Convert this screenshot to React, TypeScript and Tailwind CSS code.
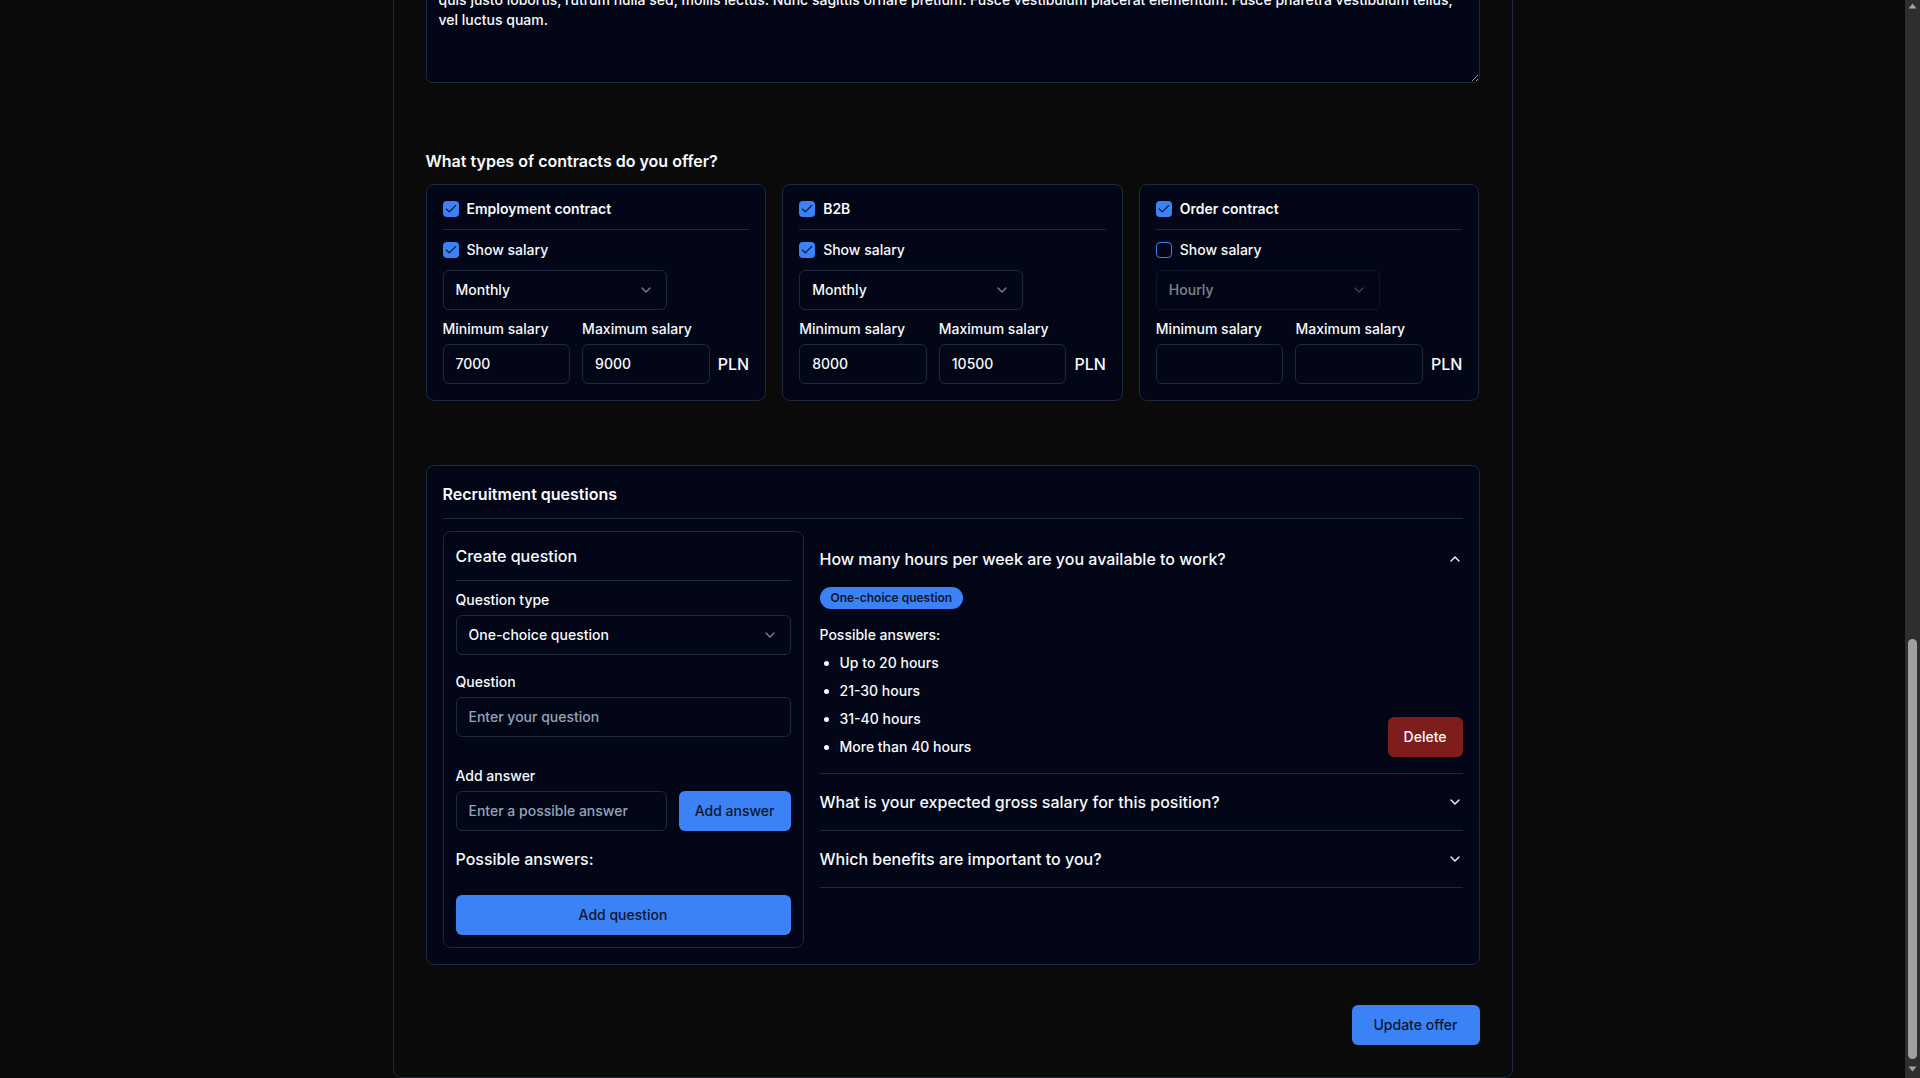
import { useLayoutEffect, useRef } from "react";

function CheckIcon() {
  return (
    <svg viewBox="0 0 24 24" className="h-3.5 w-3.5" fill="none" stroke="currentColor" strokeWidth={2} strokeLinecap="round" strokeLinejoin="round">
      <path d="M20 6 9 17l-5-5" />
    </svg>
  );
}

function ChevronDown({ className = "" }: { className?: string }) {
  return (
    <svg viewBox="0 0 24 24" className={`h-4 w-4 shrink-0 ${className}`} fill="none" stroke="currentColor" strokeWidth={2} strokeLinecap="round" strokeLinejoin="round">
      <path d="m6 9 6 6 6-6" />
    </svg>
  );
}

function ChevronUp({ className = "" }: { className?: string }) {
  return (
    <svg viewBox="0 0 24 24" className={`h-4 w-4 shrink-0 ${className}`} fill="none" stroke="currentColor" strokeWidth={2} strokeLinecap="round" strokeLinejoin="round">
      <path d="m18 15-6-6-6 6" />
    </svg>
  );
}

function Box({ checked }: { checked: boolean }) {
  return checked ? (
    <span className="flex h-4 w-4 shrink-0 items-center justify-center rounded-[4px] bg-[#3b82f6] text-[#0f172a]">
      <CheckIcon />
    </span>
  ) : (
    <span className="h-4 w-4 shrink-0 rounded-[4px] border border-[#3b82f6]" />
  );
}

function Field({ label, value }: { label: string; value: string }) {
  return (
    <div>
      <div className="text-sm font-medium leading-none">{label}</div>
      <input
        readOnly
        defaultValue={value}
        className="mt-2 block h-10 w-full rounded-md border border-[#1e293b] bg-[#020617] px-3 text-sm text-slate-50 outline-none"
      />
    </div>
  );
}

function BigText({ label, value }: { label: string; value: string }) {
  return (
    <div className="mt-6">
      <div className="text-sm font-medium leading-none">{label}</div>
      <textarea
        readOnly
        defaultValue={value}
        className="mt-2 block h-[206px] w-full rounded-md border border-[#1e293b] bg-[#020617] px-3 py-2 text-sm font-medium leading-5 text-slate-50 outline-none"
      />
    </div>
  );
}

function ContractCard({
  title,
  show,
  period,
  min,
  max,
}: {
  title: string;
  show: boolean;
  period: string;
  min: string;
  max: string;
}) {
  return (
    <div className="rounded-lg border border-[#1e293b] bg-[#020617] p-4">
      <div className="flex items-center gap-2 border-b border-[#1e293b] pb-3">
        <Box checked />
        <span className="text-sm font-semibold leading-4">{title}</span>
      </div>
      <div className="mt-3 flex items-center gap-2">
        <Box checked={show} />
        <span className="text-sm font-medium leading-4">Show salary</span>
      </div>
      <div
        className={
          show
            ? "mt-3 flex h-10 w-56 items-center justify-between rounded-md border border-[#1e293b] px-3 text-sm font-medium"
            : "mt-3 flex h-10 w-56 items-center justify-between rounded-md border border-[#1e293b] px-3 text-sm font-medium opacity-50"
        }
      >
        <span>{period}</span>
        <ChevronDown className="opacity-50" />
      </div>
      <div className="mt-3 flex items-end">
        <div className="w-32">
          <div className="text-sm font-medium leading-none">Minimum salary</div>
          <div className="mt-2 flex h-10 items-center rounded-md border border-[#1e293b] px-3 text-sm font-medium">{min}</div>
        </div>
        <div className="ml-3 w-32">
          <div className="text-sm font-medium leading-none">Maximum salary</div>
          <div className="mt-2 flex h-10 items-center rounded-md border border-[#1e293b] px-3 text-sm font-medium">{max}</div>
        </div>
        <span className="ml-2 flex h-10 items-center text-base font-medium">PLN</span>
      </div>
    </div>
  );
}

function AccordionRow({ q }: { q: string }) {
  return (
    <div className="flex items-center justify-between border-b border-[#1e293b] py-4">
      <span className="text-base font-medium leading-6">{q}</span>
      <ChevronDown />
    </div>
  );
}

function ScrollbarDrawing() {
  return (
    <div className="flex h-screen w-[15px] shrink-0 flex-col bg-[#2e2e2e]">
      <div className="flex h-[15px] justify-center pt-[3px]">
        <svg width="9" height="6" viewBox="0 0 9 6">
          <path d="M4.5 0.5 8.5 5.5H0.5Z" fill="#a3a3a3" />
        </svg>
      </div>
      <div className="flex flex-1 flex-col items-center justify-end pb-[4px]">
        <div className="h-[420px] w-[9px] rounded-full bg-[#9f9f9f]" />
      </div>
      <div className="flex h-[15px] justify-center pt-[3px]">
        <svg width="9" height="6" viewBox="0 0 9 6">
          <path d="M0.5 0.5H8.5L4.5 5.5Z" fill="#a3a3a3" />
        </svg>
      </div>
    </div>
  );
}

export default function App() {
  const ref = useRef<HTMLDivElement>(null);
  useLayoutEffect(() => {
    const el = ref.current;
    if (el) el.scrollTop = el.scrollHeight;
  }, []);

  const description =
    "We are looking for an experienced Frontend Developer to join our product team in Warsaw.\n" +
    "Lorem ipsum dolor sit amet, consectetur adipiscing elit. Cras vehicula, mi eget laoreet venenatis, neque\n" +
    "quis justo lobortis, rutrum nulla sed, mollis lectus. Nunc sagittis ornare pretium. Fusce vestibulum placerat elementum. Fusce pharetra vestibulum tellus, vel luctus quam.";

  return (
    <div className="flex h-screen bg-[#0a0a0b] text-slate-50 font-[family-name:Inter,sans-serif]">
      <div ref={ref} className="h-screen min-w-0 flex-1 overflow-y-scroll [scrollbar-width:none] [color-scheme:dark]">
        <div className="mx-auto w-[1120px] pt-10">
          <div className="rounded-lg border border-[#1e293b] p-8">
            <h1 className="text-2xl font-semibold leading-8">Edit job offer</h1>
            <p className="mt-1 text-sm leading-5 text-slate-400">Update the details of your job offer below.</p>

            <div className="mt-8 grid grid-cols-2 gap-6">
              <Field label="Job title" value="Senior Frontend Developer" />
              <Field label="Company name" value="Acme Software" />
              <Field label="Category" value="Frontend" />
              <Field label="Experience level" value="Senior" />
              <Field label="City" value="Warsaw" />
              <Field label="Work mode" value="Hybrid" />
              <Field label="Address" value="Prosta 20" />
              <Field label="Remote recruitment" value="Yes" />
              <Field label="Technologies" value="React, TypeScript, Tailwind CSS" />
              <Field label="Main technology" value="React" />
              <Field label="Languages" value="Polish, English" />
              <Field label="Start date" value="ASAP" />
              <Field label="Valid until" value="2025-12-31" />
              <Field label="Number of positions" value="2" />
            </div>

            <BigText label="Responsibilities" value="Building and maintaining web applications." />
            <BigText label="Requirements" value="3+ years of experience with React." />
            <BigText label="Benefits" value="Private medical care, sports card, flexible hours." />

            <div className="mt-6 text-sm font-medium leading-none">Description</div>
            <textarea
              readOnly
              defaultValue={description}
              className="mt-2 block h-[142px] w-full rounded-md border border-[#1e293b] bg-[#020617] px-3 py-2 text-sm font-medium leading-5 text-slate-50 outline-none"
            />

            <h3 className="mt-[66px] text-base font-semibold leading-6">What types of contracts do you offer?</h3>
            <div className="mt-[11px] grid grid-cols-3 gap-4">
              <ContractCard title="Employment contract" show period="Monthly" min="7000" max="9000" />
              <ContractCard title="B2B" show period="Monthly" min="8000" max="10500" />
              <ContractCard title="Order contract" show={false} period="Hourly" min="" max="" />
            </div>

            <div className="mt-16 rounded-lg border border-[#1e293b] bg-[#020617] p-4">
              <h3 className="border-b border-[#1e293b] pb-3 text-base font-semibold leading-6">Recruitment questions</h3>
              <div className="mt-3 grid grid-cols-[361px_1fr] items-start gap-4">
                <div className="rounded-lg border border-[#1e293b] p-3">
                  <div className="border-b border-[#1e293b] pb-3 text-base font-medium leading-6">Create question</div>
                  <div className="mt-3 text-sm font-medium leading-none">Question type</div>
                  <div className="mt-2 flex h-10 items-center justify-between rounded-md border border-[#1e293b] px-3 text-sm font-medium">
                    <span>One-choice question</span>
                    <ChevronDown className="opacity-50" />
                  </div>
                  <div className="mt-5 text-sm font-medium leading-none">Question</div>
                  <div className="mt-2 flex h-10 items-center rounded-md border border-[#1e293b] px-3 text-sm font-medium text-[#94a3b8]">
                    Enter your question
                  </div>
                  <div className="mt-8 text-sm font-medium leading-none">Add answer</div>
                  <div className="mt-2 flex gap-3">
                    <div className="flex h-10 flex-1 items-center rounded-md border border-[#1e293b] px-3 text-sm font-medium text-[#94a3b8]">
                      Enter a possible answer
                    </div>
                    <button className="h-10 rounded-md bg-[#3b82f6] px-4 text-sm font-medium text-[#0f172a]">Add answer</button>
                  </div>
                  <div className="mt-4 text-base font-medium leading-6">Possible answers:</div>
                  <button className="mt-6 block h-10 w-full rounded-md bg-[#3b82f6] text-sm font-medium text-[#0f172a]">Add question</button>
                </div>

                <div>
                  <div className="border-b border-[#1e293b]">
                    <div className="flex items-center justify-between py-4">
                      <span className="text-base font-medium leading-6">How many hours per week are you available to work?</span>
                      <ChevronUp />
                    </div>
                    <div className="flex items-end justify-between pb-4">
                      <div>
                        <div className="flex w-fit rounded-full border border-transparent bg-[#3b82f6] px-2.5 py-0.5 text-xs font-semibold leading-4 text-[#0f172a]">
                          One-choice question
                        </div>
                        <div className="mt-4 text-sm font-medium leading-5">Possible answers:</div>
                        <ul className="mt-2 list-disc space-y-2 pl-5 text-sm font-medium leading-5">
                          <li>Up to 20 hours</li>
                          <li>21-30 hours</li>
                          <li>31-40 hours</li>
                          <li>More than 40 hours</li>
                        </ul>
                      </div>
                      <button className="h-10 rounded-md bg-[#7f1d1d] px-4 text-sm font-medium text-slate-50">Delete</button>
                    </div>
                  </div>
                  <AccordionRow q="What is your expected gross salary for this position?" />
                  <AccordionRow q="Which benefits are important to you?" />
                </div>
              </div>
            </div>

            <div className="mt-10 flex justify-end">
              <button className="h-10 w-32 rounded-md bg-[#3b82f6] text-sm font-medium text-[#0f172a]">Update offer</button>
            </div>
          </div>
        </div>
      </div>
      <ScrollbarDrawing />
    </div>
  );
}
